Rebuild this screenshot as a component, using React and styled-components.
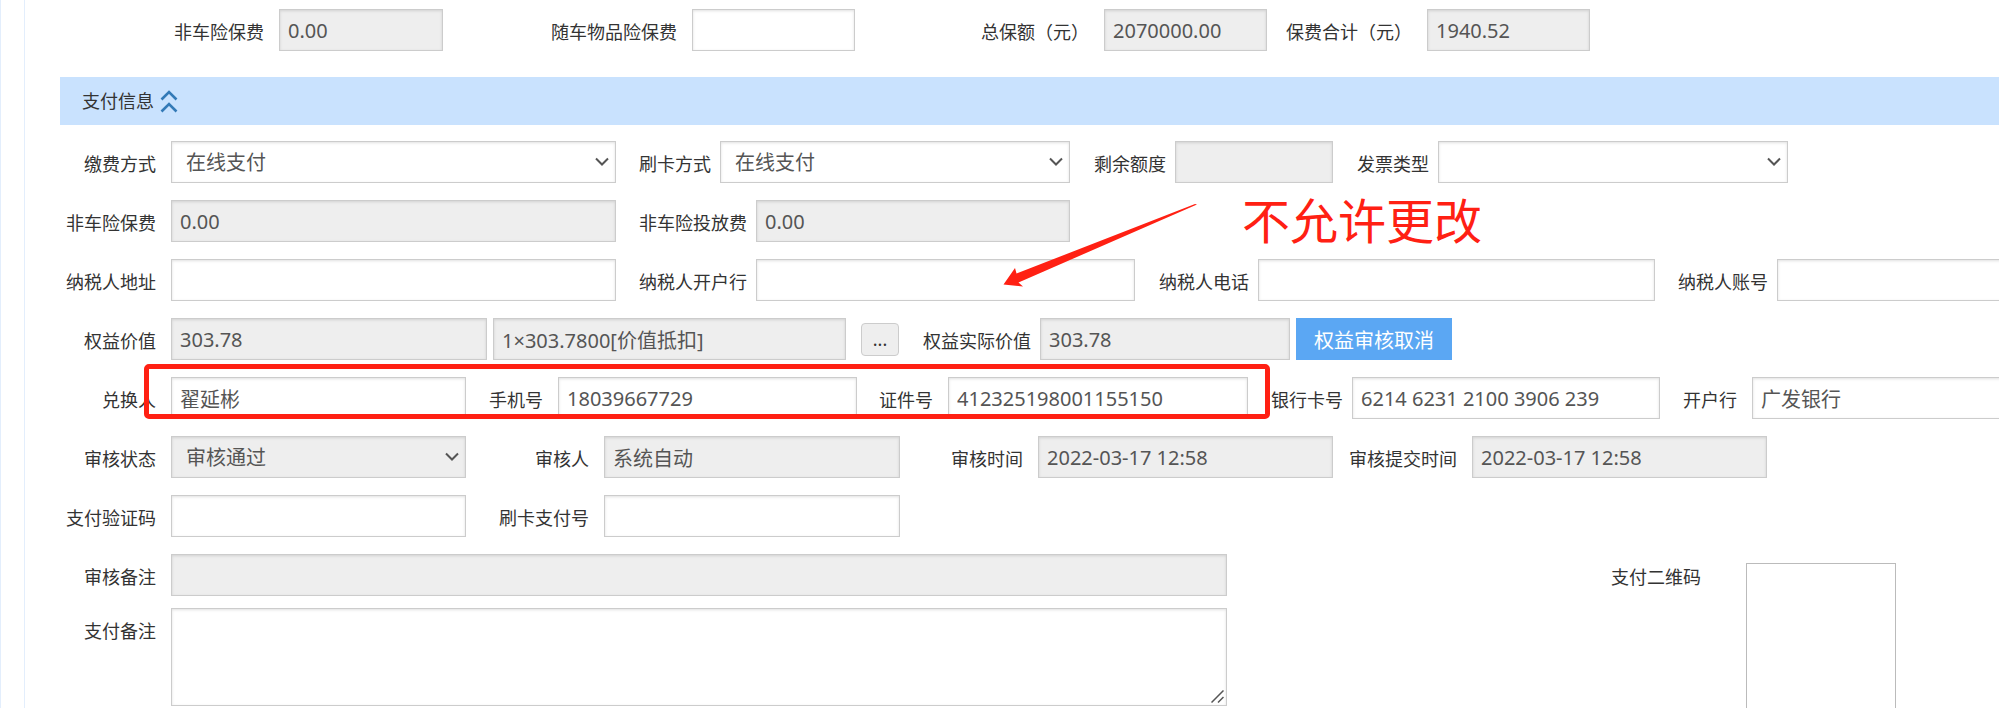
import React from "react";
import styled, { createGlobalStyle, css } from "styled-components";

const GlobalStyle = createGlobalStyle`
  *, *::before, *::after { box-sizing: border-box; }
  body {
    margin: 0;
    background: #fff;
    color: #333;
    font-family: "Noto Sans", "Noto Sans CJK SC", sans-serif;
    font-size: 18px;
  }
`;

const Page = styled.div`
  height: 100vh;
  overflow: hidden;
  padding-left: 23px;
  border-left: 1px solid #e3eefc;
`;

const Panel = styled.main`
  min-height: 100vh;
  margin-right: -40px;
  padding: 9px 0 0 35px;
  border-left: 1px solid #e3eefc;
`;

const Row = styled.div`
  display: grid;
  grid-template-columns: ${(p) => p.$columns};
  position: relative;
`;

const Summary = styled.section`
  margin-bottom: 26px;
`;

const SectionHeader = styled.h2`
  display: flex;
  align-items: center;
  gap: 6px;
  height: 48px;
  margin: 0 0 16px;
  padding-left: 22px;
  background: #c9e2fe;
  font-size: 18px;
  font-weight: 400;
  line-height: 26px;
`;

const CollapseButton = styled.button`
  display: flex;
  padding: 0;
  border: 0;
  background: none;
  color: #337ab7;
`;

const Rows = styled.section`
  display: flex;
  flex-direction: column;
  gap: 17px;
  position: relative;
`;

const Label = styled.label`
  padding: 10px ${(p) => p.$gap || 15}px 0 0;
  line-height: 26px;
  text-align: right;
  white-space: nowrap;
`;

const control = css`
  display: block;
  width: 100%;
  min-width: 0;
  height: 42px;
  margin: 0;
  border: 1px solid #ccc;
  border-radius: 0;
  background: ${(p) => (p.$muted ? "#eee" : "#fff")};
  box-shadow: inset 0 1px 3px rgba(0, 0, 0, 0.12);
  color: #555;
  font-family: inherit;
  font-size: 20px;
  outline: none;
`;

const Input = styled.input`
  ${control}
  padding: 0 8px;
`;

const SelectBox = styled.div`
  position: relative;
`;

const Select = styled.select`
  ${control}
  padding: 0 32px 0 14px;
  appearance: none;
  opacity: 1;
`;

const Chevron = styled.svg`
  position: absolute;
  top: 16px;
  right: 7px;
  pointer-events: none;
`;

const TextAreaBox = styled.div`
  position: relative;
`;

const TextArea = styled.textarea`
  ${control}
  height: 98px;
  padding: 8px;
  resize: none;
`;

const Grip = styled.svg`
  position: absolute;
  right: 3px;
  bottom: 3px;
  pointer-events: none;
`;

const Actions = styled.div`
  display: flex;
  align-items: center;
  padding-left: ${(p) => p.$inset}px;
`;

const MoreButton = styled.button`
  width: 38px;
  height: 33px;
  padding: 0;
  border: 1px solid #ccc;
  border-radius: 4px;
  background: #eee;
  color: #333;
  font: inherit;
  line-height: 28px;
`;

const PrimaryButton = styled.button`
  width: 156px;
  height: 42px;
  padding: 0;
  border: 0;
  background: #5ba7f3;
  color: #fff;
  font: inherit;
  font-size: 20px;
`;

const Highlight = styled.div`
  position: absolute;
  grid-column: 1 / 7;
  inset: -13px -22px 0 84px;
  border: 5px solid #ff2013;
  border-radius: 5px;
  pointer-events: none;
`;

const Note = styled.div`
  position: absolute;
  top: 42px;
  left: 1182px;
  color: #ff2013;
  font-family: "Noto Sans CJK SC", sans-serif;
  font-size: 48px;
  line-height: 70px;
  white-space: nowrap;
  pointer-events: none;
`;

const Arrow = styled.svg`
  position: absolute;
  top: 62px;
  left: 943px;
  pointer-events: none;
`;

const Footer = styled.div`
  display: grid;
  grid-template-columns: 1167fr 519px 150px 143fr;
`;

const Remarks = styled.div`
  display: flex;
  flex-direction: column;
  gap: 12px;
`;

const QrBox = styled.div`
  height: 150px;
  margin-top: 9px;
  border: 1px solid #bbb;
`;

function Field({ id, label, gap, value = "", muted }) {
  return (
    <>
      <Label htmlFor={id} $gap={gap}>{label}</Label>
      <Input id={id} defaultValue={value} $muted={muted} readOnly={muted} />
    </>
  );
}

function SelectField({ id, label, gap, value = "", muted }) {
  return (
    <>
      <Label htmlFor={id} $gap={gap}>{label}</Label>
      <SelectBox>
        <Select id={id} $muted={muted} disabled={muted} defaultValue={value}>
          <option value={value}>{value}</option>
        </Select>
        <Chevron width="14" height="10" viewBox="0 0 14 10" fill="none" aria-hidden="true">
          <path d="M1 1.5 7 7.5 13 1.5" stroke="#555" strokeWidth="2" />
        </Chevron>
      </SelectBox>
    </>
  );
}

export default function App() {
  return (
    <>
      <GlobalStyle />
      <Page>
        <Panel>
          <Summary>
            <Row $columns="219px 164fr 249px 163fr 249px 163fr 160px 163fr 449fr">
              <Field id="sumNonVehicle" label="非车险保费" value="0.00" muted />
              <Field id="sumGoods" label="随车物品险保费" />
              <Field id="sumInsured" label="总保额（元）" value="2070000.00" muted />
              <Field id="sumPremium" label="保费合计（元）" value="1940.52" muted />
            </Row>
          </Summary>

          <SectionHeader>
            支付信息
            <CollapseButton type="button" aria-label="收起">
              <svg width="18" height="24" viewBox="0 0 18 24" fill="none" stroke="currentColor" strokeWidth="2.600">
                <path d="M1.500 10.500 9 3 16.500 10.500M1.500 22.500 9 15 16.500 22.500" />
              </svg>
            </CollapseButton>
          </SectionHeader>

          <Rows>
            <Row $columns="111px 445fr 104px 350fr 105px 158fr 105px 350fr 251fr">
              <SelectField id="payMethod" label="缴费方式" value="在线支付" />
              <SelectField id="cardMethod" label="刷卡方式" gap={9} value="在线支付" />
              <Field id="balance" label="剩余额度" gap={9} muted />
              <SelectField id="invoiceType" label="发票类型" gap={9} />
            </Row>

            <Row $columns="111px 445fr 140px 314fr 969fr">
              <Field id="nonVehicle" label="非车险保费" value="0.00" muted />
              <Field id="nonVehicleCost" label="非车险投放费" gap={9} value="0.00" muted />
            </Row>

            <Row $columns="111px 445fr 140px 379fr 123px 397fr 122px 262fr">
              <Field id="taxAddress" label="纳税人地址" />
              <Field id="taxBank" label="纳税人开户行" gap={9} />
              <Field id="taxPhone" label="纳税人电话" gap={9} />
              <Field id="taxAccount" label="纳税人账号" gap={9} />
            </Row>

            <Row $columns="111px 316fr 6px 353fr 53px 141px 250fr 162px 587fr">
              <Field id="benefit" label="权益价值" value="303.78" muted />
              <span />
              <Input aria-label="权益明细" defaultValue="1×303.7800[价值抵扣]" readOnly $muted />
              <Actions $inset={15}>
                <MoreButton type="button">...</MoreButton>
              </Actions>
              <Field id="benefitActual" label="权益实际价值" gap={9} value="303.78" muted />
              <Actions $inset={6}>
                <PrimaryButton type="button">权益审核取消</PrimaryButton>
              </Actions>
            </Row>

            <Row $columns="111px 295fr 92px 299fr 91px 300fr 104px 308fr 92px 287fr">
              <Field id="redeemer" label="兑换人" value="翟延彬" />
              <Field id="mobile" label="手机号" value="18039667729" />
              <Field id="idNumber" label="证件号" value="412325198001155150" />
              <Field id="bankCard" label="银行卡号" gap={9} value="6214 6231 2100 3906 239" />
              <Field id="bankName" label="开户行" value="广发银行" />
              <Highlight />
            </Row>

            <Row $columns="111px 295fr 138px 296fr 138px 295fr 139px 295fr 272fr">
              <SelectField id="auditState" label="审核状态" value="审核通过" muted />
              <Field id="auditor" label="审核人" value="系统自动" muted />
              <Field id="auditTime" label="审核时间" value="2022-03-17 12:58" muted />
              <Field id="submitTime" label="审核提交时间" value="2022-03-17 12:58" muted />
            </Row>

            <Row $columns="111px 295fr 138px 296fr 1139fr">
              <Field id="payCode" label="支付验证码" />
              <Field id="cardPayNo" label="刷卡支付号" />
            </Row>

            <Footer>
              <Remarks>
                <Row $columns="111px 1fr">
                  <Field id="auditRemark" label="审核备注" muted />
                </Row>
                <Row $columns="111px 1fr">
                  <Label htmlFor="payRemark">支付备注</Label>
                  <TextAreaBox>
                    <TextArea id="payRemark" />
                    <Grip width="13" height="13" viewBox="0 0 13 13" fill="none" aria-hidden="true">
                      <path d="M0.500 12.500 12.500 0.500M7 12.500 12.500 7" stroke="#555" strokeWidth="1.500" />
                    </Grip>
                  </TextAreaBox>
                </Row>
              </Remarks>
              <Label as="span" $gap={45}>支付二维码</Label>
              <QrBox />
            </Footer>

            <Arrow width="196" height="86" viewBox="1003 203 196 86" aria-hidden="true">
              <path d="M1003.500 284.500 1015 268 1016.500 273.500 1195 204 1197 204.500 1018.500 282.500 1023 286.500Z" fill="#ff2013" />
            </Arrow>
            <Note>不允许更改</Note>
          </Rows>
        </Panel>
      </Page>
    </>
  );
}
